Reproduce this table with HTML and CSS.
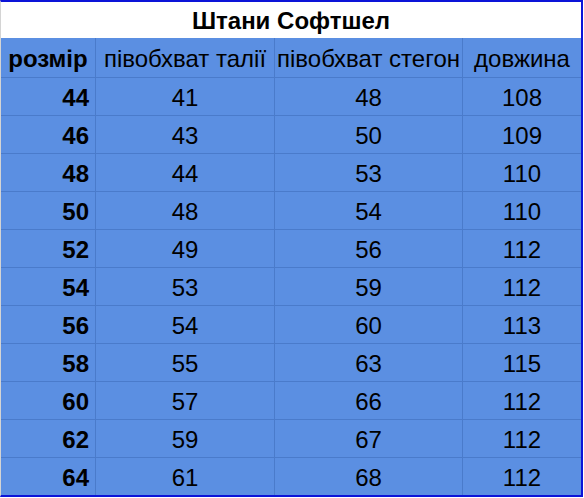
FILE: index.html
```html
<!DOCTYPE html>
<html lang="uk">
<head>
<meta charset="utf-8">
<title>Штани Софтшел</title>
<link rel="stylesheet" href="styles.css">
</head>
<body>
<div class="sheet">
  <div class="title">Штани Софтшел</div>
  <div class="grid">
    <div class="cell size head">розмір</div>
    <div class="cell">півобхват талії</div>
    <div class="cell">півобхват стегон</div>
    <div class="cell">довжина</div>

    <div class="cell size">44</div><div class="cell">41</div><div class="cell">48</div><div class="cell">108</div>
    <div class="cell size">46</div><div class="cell">43</div><div class="cell">50</div><div class="cell">109</div>
    <div class="cell size">48</div><div class="cell">44</div><div class="cell">53</div><div class="cell">110</div>
    <div class="cell size">50</div><div class="cell">48</div><div class="cell">54</div><div class="cell">110</div>
    <div class="cell size">52</div><div class="cell">49</div><div class="cell">56</div><div class="cell">112</div>
    <div class="cell size">54</div><div class="cell">53</div><div class="cell">59</div><div class="cell">112</div>
    <div class="cell size">56</div><div class="cell">54</div><div class="cell">60</div><div class="cell">113</div>
    <div class="cell size">58</div><div class="cell">55</div><div class="cell">63</div><div class="cell">115</div>
    <div class="cell size">60</div><div class="cell">57</div><div class="cell">66</div><div class="cell">112</div>
    <div class="cell size">62</div><div class="cell">59</div><div class="cell">67</div><div class="cell">112</div>
    <div class="cell size">64</div><div class="cell">61</div><div class="cell">68</div><div class="cell">112</div>
  </div>
</div>
</body>
</html>
```

FILE: styles.css
```css
html, body {
  margin: 0;
  padding: 0;
  background: #ffffff;
}
body {
  font-family: "Liberation Sans", Arial, sans-serif;
  color: #000;
}
.sheet {
  width: 580px;
  border-top: 2px solid #0c14d8;
  border-right: 2px solid #0c14d8;
  border-bottom: 2px solid #0c14d8;
  border-left: 1px solid #d4d4d4;
}
.title {
  height: 36px;
  padding-top: 2px;
  box-sizing: border-box;
  display: flex;
  align-items: center;
  justify-content: center;
  font-weight: bold;
  font-size: 24px;
  background: #fff;
}
.grid {
  display: grid;
  grid-template-columns: 94px 178px 187px 1fr;
  grid-auto-rows: 37px;
  grid-template-rows: 39px;
  gap: 1px;
  background: #4a7bcb;
}
.cell {
  background: #5b8fe2;
  display: flex;
  align-items: center;
  justify-content: center;
  font-size: 24px;
  padding-top: 2px;
  box-sizing: border-box;
  white-space: nowrap;
  overflow: hidden;
}
.size {
  font-weight: bold;
  justify-content: flex-end;
  padding-right: 6px;
}
.size.head {
  justify-content: center;
  padding-right: 0;
}
```
